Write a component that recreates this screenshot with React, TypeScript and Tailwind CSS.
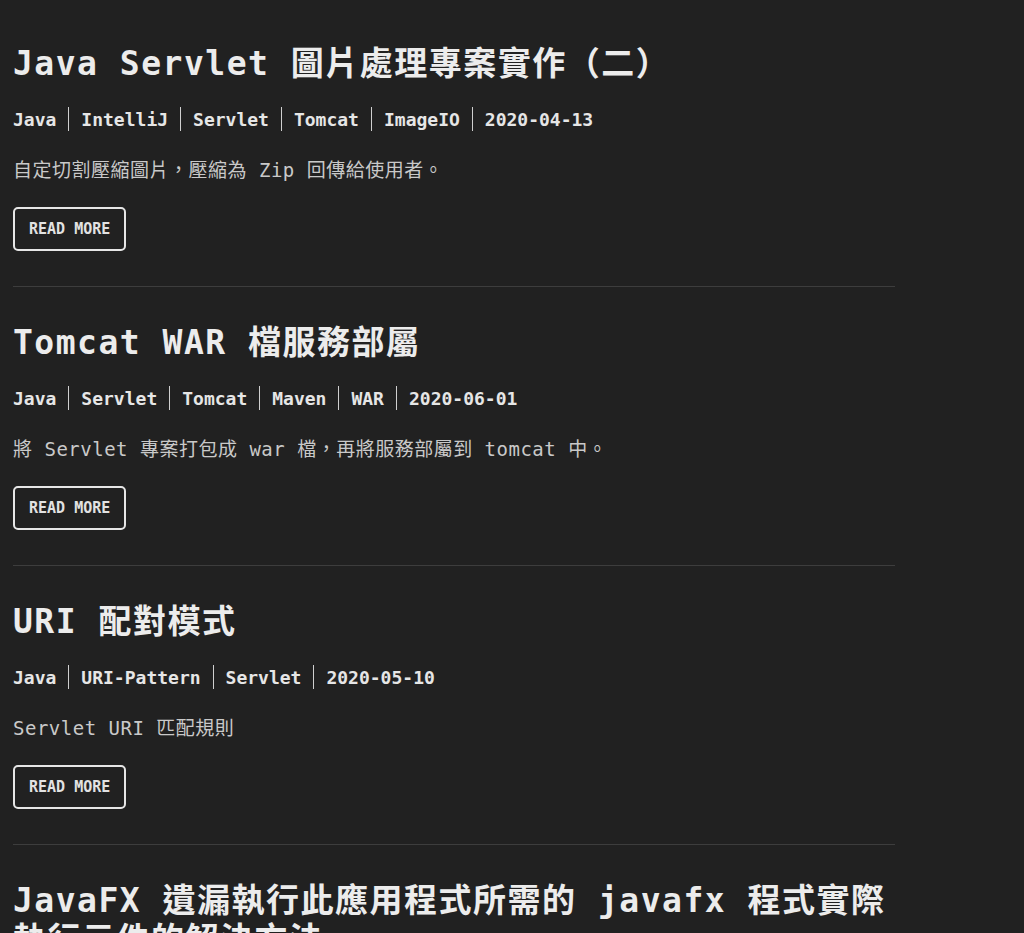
import * as React from "react";

interface Post {
  title: React.ReactNode;
  tags: string[];
  date: string;
  summary: string;
}

const paren = "font-['DejaVu_Sans_Mono','Noto_Sans_CJK_JP',monospace]";

const posts: Post[] = [
  {
    title: (
      <>
        Java Servlet 圖片處理專案實作<span className={paren}>（</span>二
        <span className={paren}>）</span>
      </>
    ),
    tags: ["Java", "IntelliJ", "Servlet", "Tomcat", "ImageIO"],
    date: "2020-04-13",
    summary: "自定切割壓縮圖片，壓縮為 Zip 回傳給使用者。",
  },
  {
    title: "Tomcat WAR 檔服務部屬",
    tags: ["Java", "Servlet", "Tomcat", "Maven", "WAR"],
    date: "2020-06-01",
    summary: "將 Servlet 專案打包成 war 檔，再將服務部屬到 tomcat 中。",
  },
  {
    title: "URI 配對模式",
    tags: ["Java", "URI-Pattern", "Servlet"],
    date: "2020-05-10",
    summary: "Servlet URI 匹配規則",
  },
  {
    title: "JavaFX 遺漏執行此應用程式所需的 javafx 程式實際執行元件的解決方法",
    tags: ["Java", "JavaFX", "IntelliJ"],
    date: "2020-03-22",
    summary: "找不到 JavaFX 執行元件時的處理方式。",
  },
];

const mono = "font-['DejaVu_Sans_Mono','Noto_Sans_CJK_TC',monospace]";

const PostItem: React.FC<{ post: Post; last: boolean }> = ({ post, last }) => {
  const items = [...post.tags, post.date];
  return (
    <article>
      <h2 className="text-[33px] leading-[39px] font-bold tracking-[1.5px] text-[#ececec]">
        {post.title}
      </h2>
      <div className="mt-6 flex items-center h-6 text-[18px] font-bold text-[#e6e6e6]">
        {items.map((item, i) => (
          <React.Fragment key={i}>
            {i > 0 && <span className="mx-3 h-6 border-l border-[#cfcfcf]" />}
            <span>{item}</span>
          </React.Fragment>
        ))}
      </div>
      <p className="mt-[25px] h-7 text-[19px] leading-7 tracking-[0.5px] text-[#c9c9c9]">
        {post.summary}
      </p>
      <button className="mt-[23px] h-[44px] px-[14px] border-2 border-[#e6e6e6] rounded-[5px] text-[15px] font-bold text-[#e2e2e2]">
        READ MORE
      </button>
      {!last && <hr className="mt-[35px] mb-9 border-0 h-px bg-[#3d3d3d]" />}
    </article>
  );
};

export default function App() {
  return (
    <div className={`min-h-screen bg-[#212121] ${mono}`}>
      <main className="ml-[13px] w-[882px] pt-[44px]">
        {posts.map((post, i) => (
          <PostItem key={i} post={post} last={i === posts.length - 1} />
        ))}
      </main>
    </div>
  );
}
